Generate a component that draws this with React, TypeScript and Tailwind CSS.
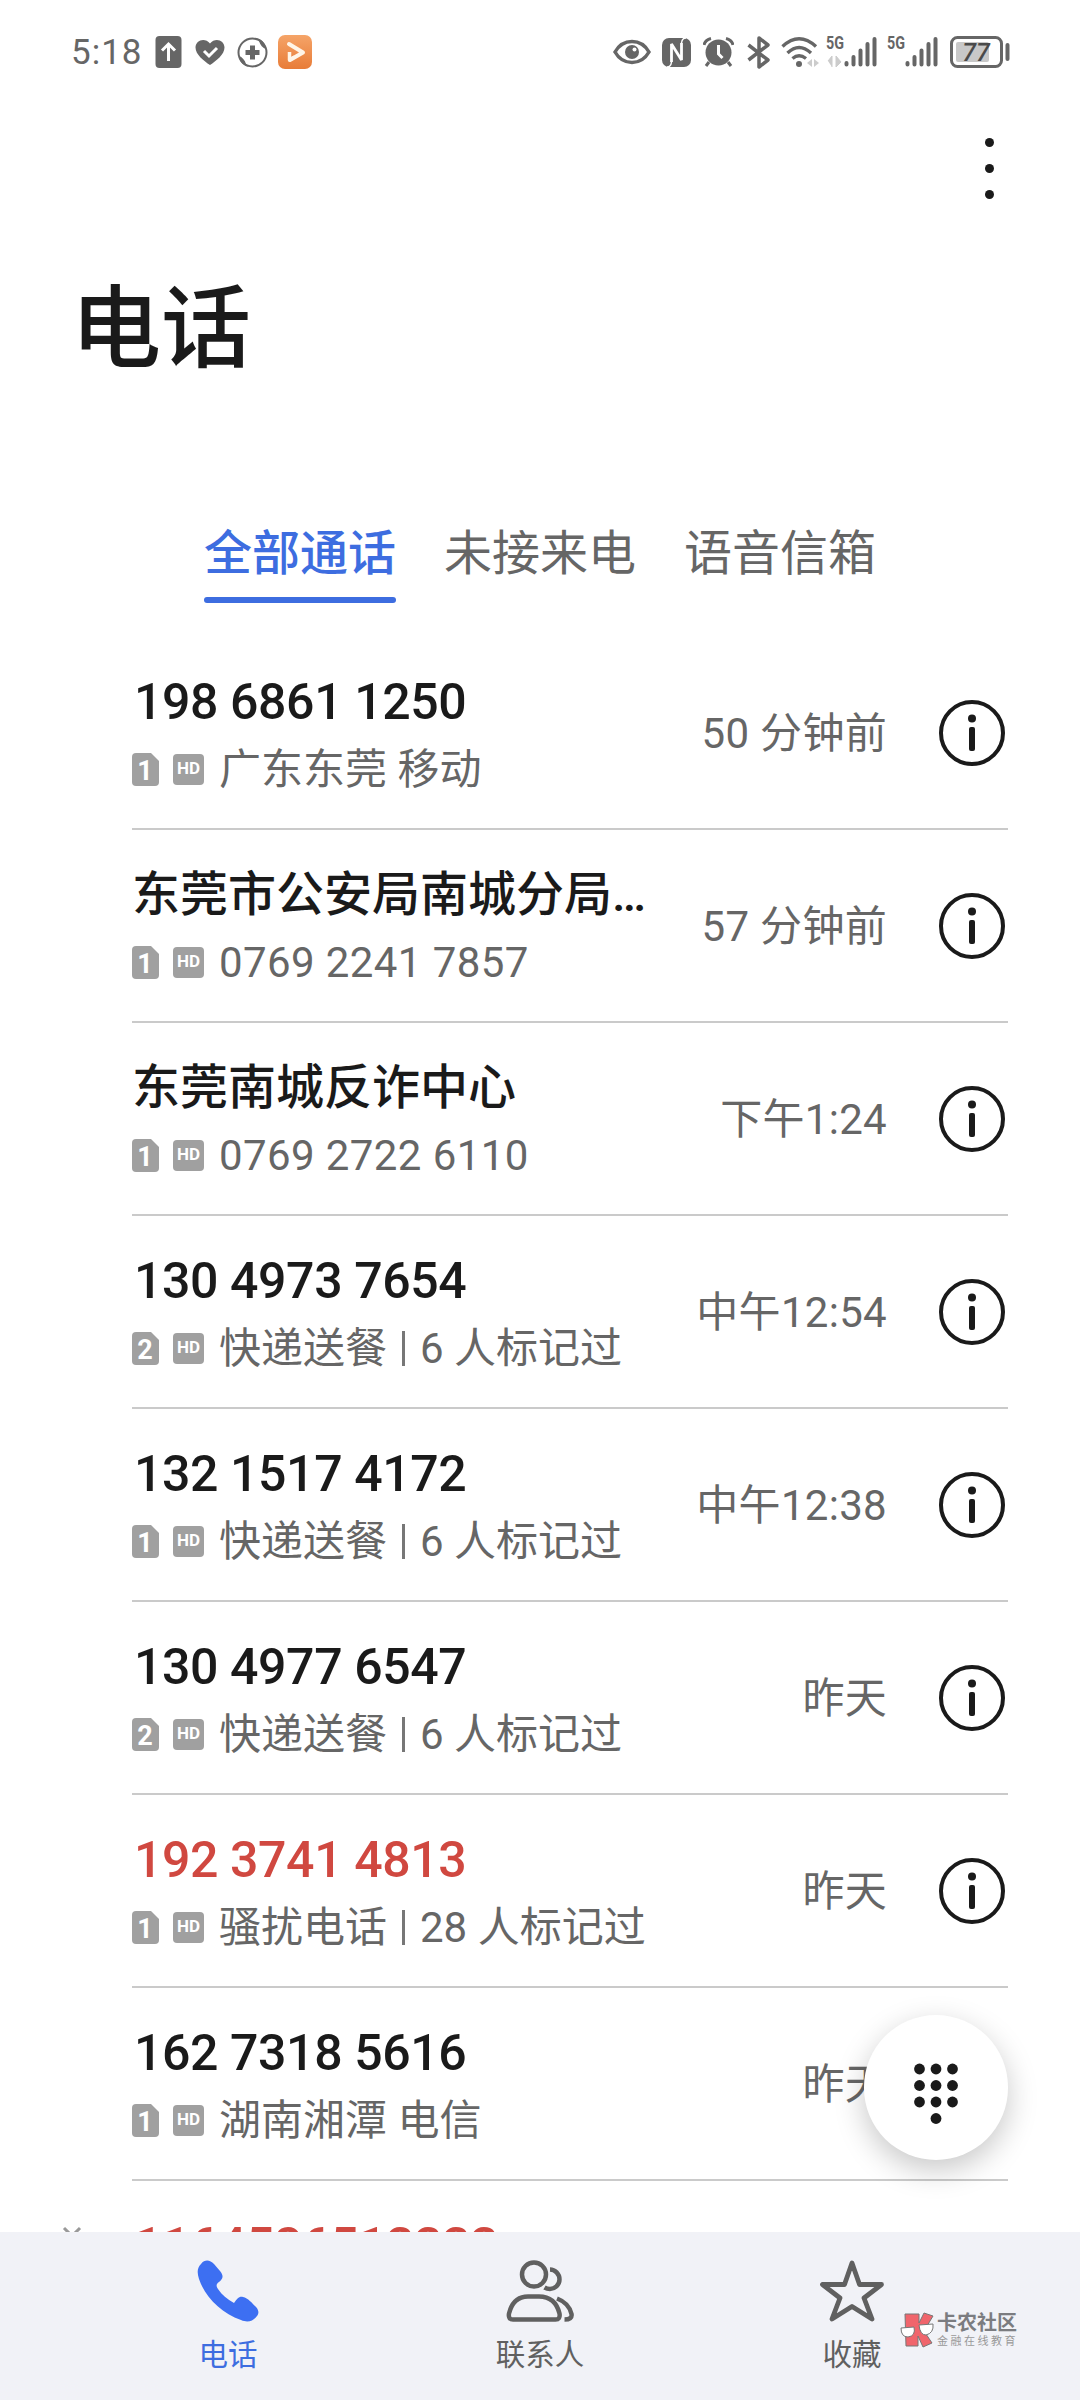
import React from 'react';

interface Call {
  name: string;
  sim: 1 | 2;
  detail: string;
  tag?: string;
  time: string;
  alert?: boolean;
}

const calls: Call[] = [
  { name: '198 6861 1250', sim: 1, detail: '广东东莞 移动', time: '50 分钟前' },
  { name: '东莞市公安局南城分局…', sim: 1, detail: '0769 2241 7857', time: '57 分钟前' },
  { name: '东莞南城反诈中心', sim: 1, detail: '0769 2722 6110', time: '下午1:24' },
  { name: '130 4973 7654', sim: 2, detail: '快递送餐', tag: '6 人标记过', time: '中午12:54' },
  { name: '132 1517 4172', sim: 1, detail: '快递送餐', tag: '6 人标记过', time: '中午12:38' },
  { name: '130 4977 6547', sim: 2, detail: '快递送餐', tag: '6 人标记过', time: '昨天' },
  { name: '192 3741 4813', sim: 1, detail: '骚扰电话', tag: '28 人标记过', time: '昨天', alert: true },
  { name: '162 7318 5616', sim: 1, detail: '湖南湘潭 电信', time: '昨天' },
];

const isNumber = (text: string) => /^[\d ]+$/.test(text);

const Signal: React.FC<{ data?: boolean }> = ({ data }) => (
  <svg className="w-[50px] h-8 overflow-visible" viewBox="0 0 50 32">
    <text x="-1" y="13" fontSize="18" fontWeight="700" fontFamily="Roboto" textLength="18" lengthAdjust="spacingAndGlyphs" fill="#666">5G</text>
    {data && <path d="M1 25l4-5v11M9 20v11l5-5z" fill="#ccc" stroke="#ccc" />}
    <g stroke="#666" strokeWidth="4" strokeLinecap="round">
      <path d="M19.500 27v1.500M26.500 21v7.500M33.500 14.500v14M40.500 8v20.500M47.500 3v25.500" />
    </g>
  </svg>
);

const StatusBar: React.FC = () => (
  <div className="h-[104px] pl-[71px] pr-[70px] flex items-center justify-between text-[#666]">
    <div className="flex items-center">
      <span className="w-[84px] text-[35px] leading-none tracking-[1px]">5:18</span>
      <svg className="w-[27px] h-8" viewBox="0 0 27 32">
        <rect x="0.500" width="26" height="32" rx="4" fill="#666" />
        <path d="M13.500 25V8M7 14.500l6.500-6.500 6.500 6.500" fill="none" stroke="#fff" strokeWidth="3" />
      </svg>
      <svg className="w-[30px] h-[27px] ml-[13px]" viewBox="0 0 30 27">
        <path d="M15 26C9 22 0.500 15.500 0.500 8.500 0.500 1 10-2 15 4.500 20-2 29.500 1 29.500 8.500 29.500 15.500 21 22 15 26z" fill="#666" />
        <path d="M9 12l5 5 8-8" fill="none" stroke="#fff" strokeWidth="3" />
      </svg>
      <svg className="w-[31px] h-[31px] ml-[12px]" viewBox="0 0 31 31">
        <circle cx="15.500" cy="15.500" r="14" fill="none" stroke="#666" strokeWidth="2" />
        <path d="M2 19c3 1 6 4 7 8 1 2 3 3 5 3C7 30 2 25 2 19zM29 12c-3-1-6-4-7-8-1-2-3-3-5-3 7 0 12 5 12 11z" fill="#666" />
        <path d="M15.500 8.500v14M8.500 15.500h14" stroke="#666" strokeWidth="5" />
      </svg>
      <svg className="w-[34px] h-[34px] ml-[10px]" viewBox="0 0 34 34">
        <defs>
          <linearGradient id="play" x2="0" y2="1">
            <stop stopColor="#f5a468" />
            <stop offset="1" stopColor="#e87c38" />
          </linearGradient>
        </defs>
        <rect width="34" height="34" rx="7" fill="url(#play)" />
        <path d="M11 9l14 8.500L12 25" fill="none" stroke="#fff5e8" strokeWidth="4" strokeLinejoin="round" strokeLinecap="round" />
        <path d="M11.500 17v8l5-3" fill="none" stroke="#fff5e8" strokeWidth="3.500" strokeLinejoin="round" />
      </svg>
    </div>
    <div className="flex items-center">
      <svg className="w-[38px] h-[26px]" viewBox="0 0 38 26">
        <path d="M2 13C10-1 28-1 36 13 28 27 10 27 2 13z" fill="none" stroke="#666" strokeWidth="3.500" />
        <circle cx="19" cy="13" r="7" fill="#666" />
        <circle cx="21.500" cy="10.500" r="2" fill="#fff" />
      </svg>
      <svg className="w-[29px] h-[29px] ml-[11px]" viewBox="0 0 29 29">
        <rect width="29" height="29" rx="7" fill="#666" />
        <path d="M9.500 24V6L19.500 22V5" fill="none" stroke="#fff" strokeWidth="2.800" strokeLinejoin="bevel" />
        <path d="M5 29q4 0 4.500-5M24 0q-4 0-4.500 5" fill="none" stroke="#fff" strokeWidth="1.500" />
      </svg>
      <svg className="w-[31px] h-[30px] ml-[12px]" viewBox="0 0 31 30">
        <circle cx="15.500" cy="15.500" r="13" fill="#666" />
        <path d="M1 8Q2 3 8 1.500M30 8Q29 3 23 1.500M6 25l-3 4M25 25l3 4" fill="none" stroke="#666" strokeWidth="3" />
        <path d="M15.500 8v9l4 4" fill="none" stroke="#fff" strokeWidth="3" />
      </svg>
      <svg className="w-[24px] h-[33px] ml-[13px]" viewBox="0 0 24 33">
        <path d="M1.500 9L21 24l-9 7V2l9 7L1.500 24" fill="none" stroke="#666" strokeWidth="3.500" strokeLinejoin="round" />
      </svg>
      <svg className="w-[38px] h-[32px] ml-[10px]" viewBox="0 0 38 32">
        <g fill="none" stroke="#666" strokeWidth="3.400">
          <path d="M1.500 10.500Q18 -5 35 10.500M6.500 17Q18 6 30 17M11.500 22.500Q18 17 25 22.500" />
        </g>
        <circle cx="18" cy="28" r="3" fill="#666" />
        <path d="M31 23v8l-5-4zM33 23v8l5-4z" fill="#ccc" />
      </svg>
      <div className="flex items-center gap-[11px] ml-[8px]">
        <Signal data />
        <Signal />
      </div>
      <svg className="w-[60px] h-[32px] ml-[12px]" viewBox="0 0 60 32">
        <rect x="1.500" y="1.500" width="50" height="29" rx="6" fill="none" stroke="#666" strokeWidth="3" />
        <rect x="6" y="6" width="33" height="20" rx="2" fill="#c8c8c8" />
        <path d="M57.500 9v14" stroke="#666" strokeWidth="4" strokeLinecap="round" />
        <text x="26" y="25" fontSize="25" fontFamily="Roboto" fontStyle="italic" fontWeight="500" textAnchor="middle" fill="#4a4a4a">77</text>
      </svg>
    </div>
  </div>
);

const SimBadge: React.FC<{ sim: 1 | 2 }> = ({ sim }) => (
  <svg className="w-[27px] h-[33px] shrink-0" viewBox="0 0 27 33">
    <path d="M4 0h15l8 8v21q0 4-4 4H4q-4 0-4-4V4q0-4 4-4z" fill="#a0a0a0" />
    <text x="13" y="26.500" fontSize="27" fontWeight="700" fontFamily="Roboto" textAnchor="middle" fill="#fff">{sim}</text>
  </svg>
);

const HdBadge: React.FC = () => (
  <span className="w-[31px] h-[31px] shrink-0 ml-[14px] rounded-[4px] bg-[#a0a0a0] text-white text-[17px] font-bold flex items-center justify-center">
    HD
  </span>
);

const InfoIcon: React.FC = () => (
  <svg className="w-[66px] h-[66px] shrink-0" viewBox="0 0 66 66">
    <circle cx="33" cy="33" r="31" fill="none" stroke="#1a1a1a" strokeWidth="4" />
    <circle cx="33" cy="18.500" r="4" fill="#1a1a1a" />
    <rect x="30" y="27" width="6" height="24" rx="2" fill="#1a1a1a" />
  </svg>
);

const CallRow: React.FC<{ call: Call }> = ({ call }) => (
  <div className="h-[193px] shrink-0 ml-[132px] mr-[72px] pr-[3px] flex items-center border-b-2 border-[#cacaca]">
    <div className="flex-1 min-w-0 pt-[5px]">
      <div className={`h-[68px] leading-[68px] font-medium whitespace-nowrap ${isNumber(call.name) ? 'pl-[2px] text-[50px] tracking-[-0.4px]' : 'text-[48px]'} ${call.alert ? 'text-[#d04840]' : 'text-[#1a1a1a]'}`}>
        {call.name}
      </div>
      <div className="h-[66px] flex items-center text-[42px] text-[#666] whitespace-nowrap">
        <SimBadge sim={call.sim} />
        <HdBadge />
        <span className={`ml-[15px] ${isNumber(call.detail) ? 'tracking-[0.4px]' : ''}`}>{call.detail}</span>
        {call.tag && <span className="w-[3px] h-[35px] mx-[15px] bg-[#777]" />}
        {call.tag && <span>{call.tag}</span>}
      </div>
    </div>
    <span className="pt-[2px] text-[42px] tracking-[0.3px] text-[#666] mr-[52px] whitespace-nowrap">{call.time}</span>
    <InfoIcon />
  </div>
);

const App: React.FC = () => {
  return (
    <div className="relative w-[1080px] h-[2400px] bg-white overflow-hidden flex flex-col font-[Roboto,'Noto_Sans_CJK_SC',sans-serif]">
      <StatusBar />

      <div className="h-[130px] pr-[86px] flex justify-end items-center">
        <div className="flex flex-col gap-[17px] -mt-[2px]">
          <span className="w-[9px] h-[9px] rounded-full bg-[#1a1a1a]" />
          <span className="w-[9px] h-[9px] rounded-full bg-[#1a1a1a]" />
          <span className="w-[9px] h-[9px] rounded-full bg-[#1a1a1a]" />
        </div>
      </div>

      <h1 className="h-[192px] pl-[71px] leading-[192px] text-[90px] font-medium text-[#1a1a1a]">电话</h1>

      <div className="h-[211px] pt-[93px] flex items-start justify-center gap-[48px] text-[48px] text-[#666]">
        <div className="h-[84px] flex flex-col justify-between text-[#3d6de0] font-medium">
          <span className="leading-[70px]">全部通话</span>
          <span className="h-[6px] rounded-full bg-[#3d6de0]" />
        </div>
        <span className="leading-[70px]">未接来电</span>
        <span className="leading-[70px]">语音信箱</span>
      </div>

      <div className="flex-1 min-h-0 overflow-hidden flex flex-col">
        {calls.map((call) => (
          <CallRow key={call.name} call={call} />
        ))}
        <div className="h-[193px] shrink-0 pl-[60px] pt-[31px] flex items-start">
          <svg className="w-6 h-8 mt-[14px] mr-[50px]" viewBox="0 0 24 32">
            <path d="M4 2l8 8 8-8" fill="none" stroke="#999" strokeWidth="3" />
          </svg>
          <span className="leading-[68px] text-[50px] tracking-[-0.4px] font-medium text-[#d04840]">1164526513333</span>
        </div>
      </div>

      <div className="h-[168px] shrink-0 pt-[28px] bg-[#f1f2f7] flex justify-center text-[29.500px] text-[#606060]">
        <div className="w-[312px] flex flex-col items-center text-[#3d6de0]">
          <svg className="w-[62px] h-[62px]" viewBox="0 0 62 62">
            <path d="M4 4C8-1 13 0 17 4l6 7c4 5 3 8-1 11-3 2-3 4-1 7 4 6 9 10 16 14 3-4 5-7 9-6 5 1 9 6 13 10 3 3 3 7 1 9-4 5-9 7-16 4C24 53 8 37 2 19 0 13 0 8 4 4z" fill="#3d6ff2" />
          </svg>
          <span className="mt-[12px] leading-[42px]">电话</span>
        </div>
        <div className="w-[312px] flex flex-col items-center">
          <svg className="w-[70px] h-[62px]" viewBox="0 0 70 62" fill="none" stroke="#606060" strokeWidth="4.500">
            <circle cx="29" cy="14.500" r="12" />
            <path d="M23 36.500h11c12 0 18 7 20.500 17q1 6-4 6H8q-5 0-4-6C6.500 43.500 12 36.500 23 36.500z" />
            <path d="M45 9.500c5 0 9.500 4.500 9.500 10s-5 9.500-9.500 9.500q-3 0-5.500-1.500M52 38.500c8 3 13 9 14.500 15.500q1 5.500-7 5.500" />
          </svg>
          <span className="mt-[12px] leading-[42px]">联系人</span>
        </div>
        <div className="w-[312px] flex flex-col items-center">
          <svg className="w-[66px] h-[62px]" viewBox="0 0 66 62">
            <path d="M33 3l7.500 21.500H62.500L45 38l8 21-20-12.500L13 59l8-21L3.500 24.500h22z" fill="none" stroke="#606060" strokeWidth="4.800" strokeLinejoin="round" />
          </svg>
          <span className="mt-[12px] leading-[42px]">收藏</span>
        </div>
      </div>

      {/* dial pad button */}
      <button className="absolute left-[864px] top-[2015px] w-[144px] h-[145px] rounded-full bg-white shadow-[0_10px_30px_rgba(0,0,0,0.22)]">
        <svg className="w-[44px] h-[62px] mx-auto mt-[12px]" viewBox="0 0 44 62" fill="#1a1a1a">
          {[0, 1, 2].map((row) => [0, 1, 2].map((col) => (
            <circle key={`${row}-${col}`} cx={5.5 + col * 16.5} cy={6 + row * 16.5} r="5.400" />
          )))}
          <circle cx="22" cy="55.500" r="5.400" />
        </svg>
      </button>

      {/* community mark */}
      <div className="absolute left-[900px] top-[2312px] flex">
        <svg className="w-[34px] h-[36px]" viewBox="0 0 34 36">
          <path d="M5 2h14v9L24 1l9 3-9 15 8 12-9 4-5-11v10H6z" fill="#f0656c" stroke="#777" />
          <path d="M1 16l13-1q2 9-6 10-7 0-7-9zM19 13l14-1q1 9-7 11-6 0-7-10z" fill="#fff" stroke="#777" />
        </svg>
        <div className="ml-[3px] text-[#7b7c80]">
          <div className="text-[20px] leading-[23px] font-bold">卡农社区</div>
          <div className="text-[11px] leading-[13px] tracking-[2.5px] text-[#999]">金融在线教育</div>
        </div>
      </div>
    </div>
  );
};

export default App;
